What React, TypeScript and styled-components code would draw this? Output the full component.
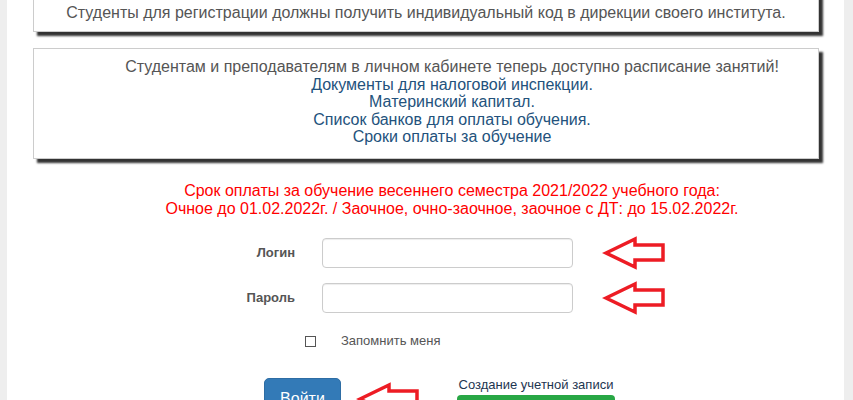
import React from "react";
import styled, { createGlobalStyle } from "styled-components";

const Global = createGlobalStyle`
  html, body { margin: 0; padding: 0; background: #eeeeee; overflow: hidden; }
  body { font-family: "Liberation Sans", Arial, sans-serif; }
  * { box-sizing: border-box; }
`;

const Page = styled.div`
  margin: -6px 9px 0 7px;
  background: #ffffff;
  min-height: 460px;
  padding: 0 25px 0 26px;
`;

const NoticeBox = styled.div<{ $shift?: number }>`
  border: 1px solid #cccccc;
  box-shadow: 4px 4px 2px #333333;
  background: #fff;
  text-align: center;
  font-size: 16px;
  color: #555555;
  padding: ${(p) => (p.$shift ? `9px 10px 12px ${10 + p.$shift}px` : "9px 10px")};
  line-height: ${(p) => (p.$shift ? "17.5px" : "18px")};
  margin-bottom: 16px;
`;

const NoticeLink = styled.a`
  display: block;
  color: #23527c;
  text-decoration: none;
`;

const Alert = styled.div`
  color: #ff0000;
  font-size: 16px;
  line-height: 18px;
  text-align: center;
  padding-left: 52px;
  margin-top: 23px;
  margin-bottom: 20px;
`;

const FieldRow = styled.div`
  display: flex;
  align-items: center;
  height: 30px;
  margin-bottom: 15px;
`;

const Label = styled.label`
  width: 262px;
  text-align: right;
  font-size: 13px;
  font-weight: bold;
  color: #555555;
  margin-right: 27px;
`;

const Input = styled.input`
  width: 251px;
  height: 30px;
  border: 1px solid #cccccc;
  border-radius: 4px;
  box-shadow: inset 0 1px 1px rgba(0, 0, 0, 0.075);
  margin: 0 29px 0 0;
  padding: 4px 10px;
  font-size: 13px;
`;

const RememberRow = styled.div`
  display: flex;
  align-items: center;
  padding-left: 272px;
  margin-top: 22px;
  height: 12px;
`;

const Check = styled.input`
  appearance: none;
  width: 11px;
  height: 11px;
  border: 1px solid #555555;
  border-radius: 0;
  margin: 2px 25px 0 0;
  background: #fff;
`;

const CheckText = styled.span`
  font-size: 13px;
  color: #555555;
`;

const ActionRow = styled.div`
  display: flex;
  align-items: flex-start;
  padding-left: 231px;
  margin-top: 31px;
`;

const LoginButton = styled.button`
  background: #337ab7;
  border: 1px solid #2e6da4;
  border-radius: 5px;
  color: #ffffff;
  font-family: "Liberation Sans", Arial, sans-serif;
  font-size: 16px;
  line-height: 22px;
  padding: 9px 15px;
  width: 77px;
`;

const ArrowSvg = styled.svg<{ $top?: number }>`
  display: block;
  flex: none;
  margin: ${(p) => p.$top ?? -2}px 0 -2px 0;
`;

const SideArrow = styled(ArrowSvg)`
  margin-left: 15px;
  margin-right: 35px;
`;

const Register = styled.div`
  display: flex;
  flex-direction: column;
  align-items: center;
  width: 158px;
`;

const RegisterText = styled.span`
  font-size: 13px;
  color: #1d3550;
  line-height: 16px;
  margin-top: -1px;
`;

const GreenButton = styled.div`
  width: 158px;
  height: 40px;
  margin-top: 2px;
  background: #28a745;
  border-radius: 4px;
`;

const Arrow = ({ top, as }: { top?: number; as?: any }) => {
  const Comp = as || ArrowSvg;
  return (
    <Comp $top={top} width="66" height="34" viewBox="0 0 66 34">
      <path
        d="M4 17 L33 3 L33 9 L61 9 L61 24 L33 24 L33 31 Z"
        fill="none"
        stroke="#ed1c24"
        strokeWidth="3.5"
        strokeLinejoin="miter"
      />
    </Comp>
  );
};

export default function App() {
  return (
    <>
      <Global />
      <Page>
        <NoticeBox>
          Студенты для регистрации должны получить индивидуальный код в дирекции своего института.
        </NoticeBox>
        <NoticeBox $shift={52}>
          Студентам и преподавателям в личном кабинете теперь доступно расписание занятий!
          <NoticeLink href="#">Документы для налоговой инспекции.</NoticeLink>
          <NoticeLink href="#">Материнский капитал.</NoticeLink>
          <NoticeLink href="#">Список банков для оплаты обучения.</NoticeLink>
          <NoticeLink href="#">Сроки оплаты за обучение</NoticeLink>
        </NoticeBox>
        <Alert>
          Срок оплаты за обучение весеннего семестра 2021/2022 учебного года:
          <br />
          Очное до 01.02.2022г. / Заочное, очно-заочное, заочное с ДТ: до 15.02.2022г.
        </Alert>
        <FieldRow>
          <Label>Логин</Label>
          <Input type="text" />
          <Arrow />
        </FieldRow>
        <FieldRow>
          <Label>Пароль</Label>
          <Input type="password" />
          <Arrow />
        </FieldRow>
        <RememberRow>
          <Check type="checkbox" />
          <CheckText>Запомнить меня</CheckText>
        </RememberRow>
        <ActionRow>
          <LoginButton>Войти</LoginButton>
          <Arrow as={SideArrow} top={4} />
          <Register>
            <RegisterText>Создание учетной записи</RegisterText>
            <GreenButton />
          </Register>
        </ActionRow>
      </Page>
    </>
  );
}
